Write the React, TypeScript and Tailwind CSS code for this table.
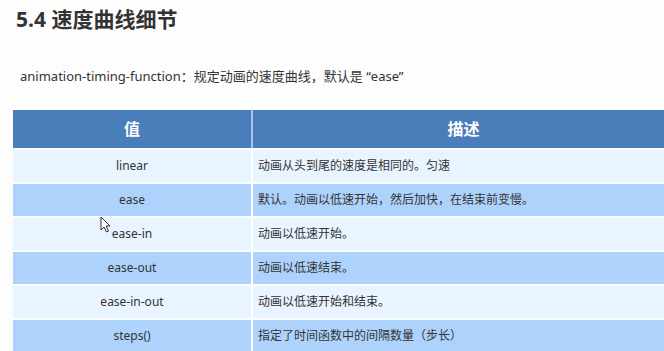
const ROWS = [
  { value: "linear", desc: "动画从头到尾的速度是相同的。匀速" },
  { value: "ease", desc: "默认。动画以低速开始，然后加快，在结束前变慢。" },
  { value: "ease-in", desc: "动画以低速开始。" },
  { value: "ease-out", desc: "动画以低速结束。" },
  { value: "ease-in-out", desc: "动画以低速开始和结束。" },
  { value: "steps()", desc: "指定了时间函数中的间隔数量（步长）" },
];

const FONT = "font-['Segoe_UI','Noto_Sans','Noto_Sans_CJK_SC',sans-serif]";

export default function App() {
  return (
    <div className={`relative w-[664px] h-[351px] overflow-hidden bg-[#fdfdfd] text-[#333] ${FONT}`}>
      {/* Heading */}
      <h1 className="pl-[16px] pt-[4px] h-[36px] text-[21px] leading-[30px] font-bold text-[#333]">
        5.4 速度曲线细节
      </h1>

      {/* Intro line */}
      <p className="pl-[20px] mt-[31px] text-[13px] leading-[18px] text-[#333]">
        animation-timing-function：规定动画的速度曲线，默认是 “ease”
      </p>

      {/* Table */}
      <div className="ml-[13px] mt-[25px] w-[661px] flex flex-col gap-[2px]">
        <div className="flex h-[38px] bg-[#4a7ebb] text-white font-bold text-[16px]">
          <div className="w-[238px] flex items-center justify-center">值</div>
          <div className="w-[2px] bg-[#a9c4e4]" />
          <div className="flex-1 flex items-center justify-center">描述</div>
        </div>
        {ROWS.map((row, i) => (
          <div
            key={row.value}
            className={`flex h-[32px] text-[12px] ${i % 2 === 0 ? "bg-[#e8f4ff]" : "bg-[#add3fd]"}`}
          >
            <div className="w-[238px] flex items-center justify-center">{row.value}</div>
            <div className="w-[2px] bg-white" />
            <div className="flex-1 flex items-center pl-[5px]">{row.desc}</div>
          </div>
        ))}
      </div>

      {/* Mouse cursor */}
      <svg
        className="absolute left-[100px] top-[216px]"
        width="11"
        height="17"
        viewBox="0 0 11 17"
      >
        <path
          d="M1 1 L1 14 L4 11 L6.5 16 L8.5 15 L6 10 L10 10 Z"
          fill="white"
          stroke="#333"
          strokeWidth="1"
          strokeLinejoin="round"
        />
      </svg>
    </div>
  );
}
